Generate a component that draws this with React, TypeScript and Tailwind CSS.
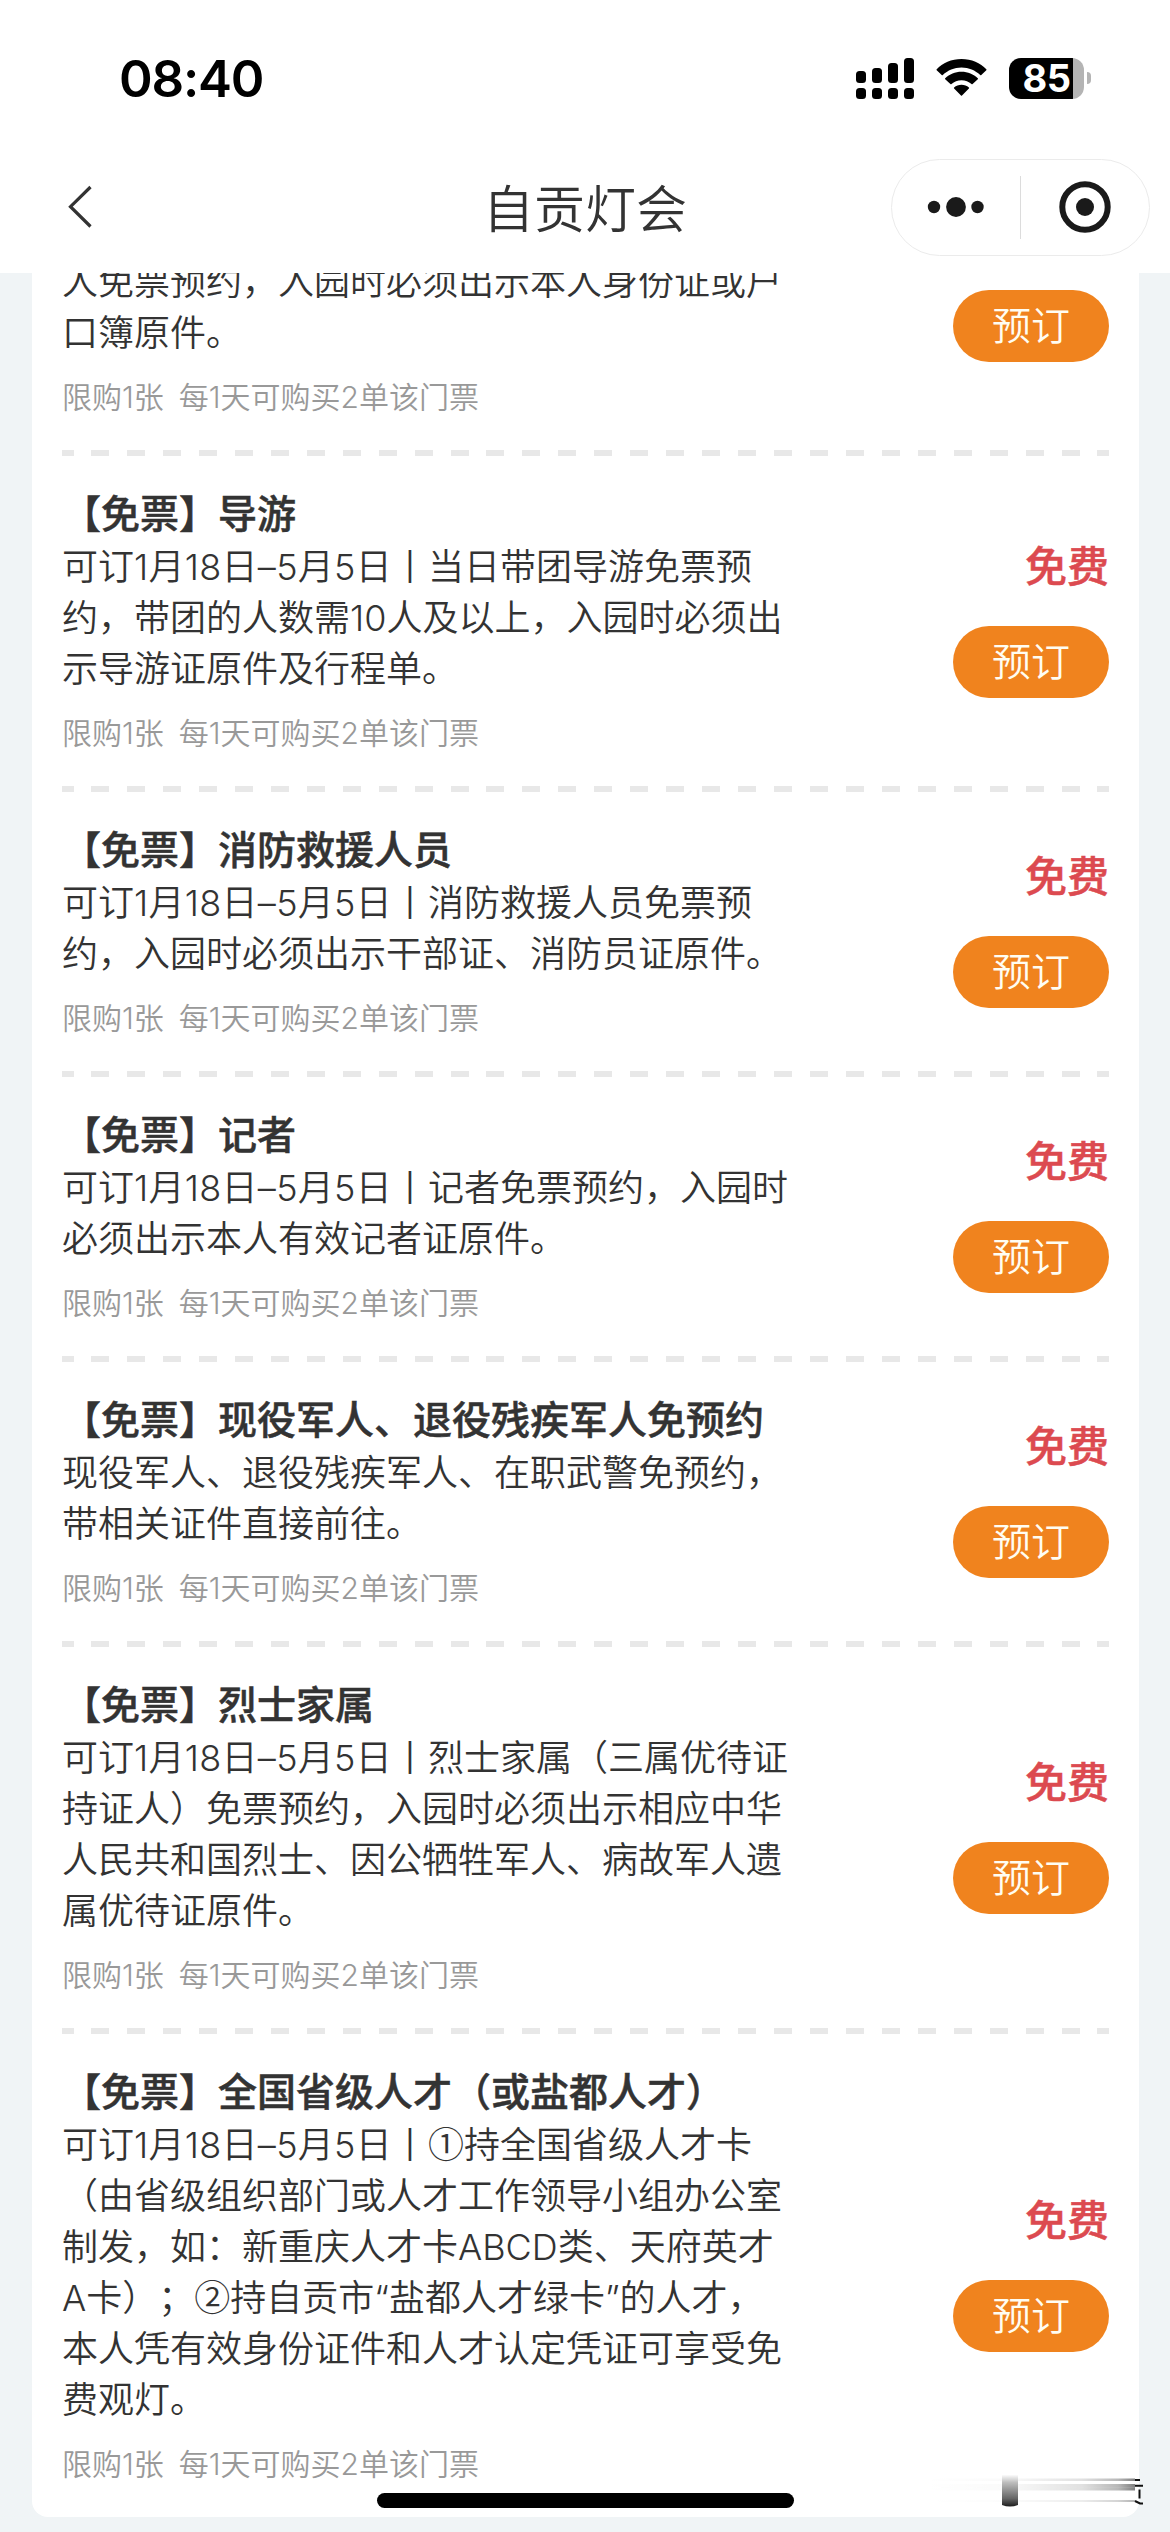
interface Ticket {
  title: string;
  lines: string[];
  price: string;
}

const tickets: Ticket[] = [
  {
    title: "",
    lines: ["", "人免票预约，入园时必须出示本人身份证或户", "口簿原件。"],
    price: "",
  },
  {
    title: "【免票】导游",
    lines: [
      "可订1月18日–5月5日丨当日带团导游免票预",
      "约，带团的人数需10人及以上，入园时必须出",
      "示导游证原件及行程单。",
    ],
    price: "免费",
  },
  {
    title: "【免票】消防救援人员",
    lines: [
      "可订1月18日–5月5日丨消防救援人员免票预",
      "约，入园时必须出示干部证、消防员证原件。",
    ],
    price: "免费",
  },
  {
    title: "【免票】记者",
    lines: [
      "可订1月18日–5月5日丨记者免票预约，入园时",
      "必须出示本人有效记者证原件。",
    ],
    price: "免费",
  },
  {
    title: "【免票】现役军人、退役残疾军人免预约",
    lines: [
      "现役军人、退役残疾军人、在职武警免预约，",
      "带相关证件直接前往。",
    ],
    price: "免费",
  },
  {
    title: "【免票】烈士家属",
    lines: [
      "可订1月18日–5月5日丨烈士家属（三属优待证",
      "持证人）免票预约，入园时必须出示相应中华",
      "人民共和国烈士、因公牺牲军人、病故军人遗",
      "属优待证原件。",
    ],
    price: "免费",
  },
  {
    title: "【免票】全国省级人才（或盐都人才）",
    lines: [
      "可订1月18日–5月5日丨①持全国省级人才卡",
      "（由省级组织部门或人才工作领导小组办公室",
      "制发，如：新重庆人才卡ABCD类、天府英才",
      "A卡）；②持自贡市“盐都人才绿卡”的人才，",
      "本人凭有效身份证件和人才认定凭证可享受免",
      "费观灯。",
    ],
    price: "免费",
  },
];

function StatusBar() {
  return (
    <div className="flex h-[156px] items-center justify-between pl-[119px] pr-[79px]">
      <span className="text-[51px] font-semibold leading-none tracking-[-1.2px] text-black">
        08:40
      </span>
      <div className="flex items-center">
        <svg className="h-[41px] w-[58px]" viewBox="0 0 58 41">
          <rect x="0" y="13" width="10" height="12" rx="3.500" />
          <rect x="16" y="10" width="10" height="15" rx="3.500" />
          <rect x="32" y="5" width="10" height="20" rx="3.500" />
          <rect x="48" y="0" width="10" height="25" rx="3.500" />
          <rect x="0" y="30" width="10" height="11" rx="3.500" />
          <rect x="16" y="30" width="10" height="11" rx="3.500" />
          <rect x="32" y="30" width="10" height="11" rx="3.500" />
          <rect x="48" y="30" width="10" height="11" rx="3.500" />
        </svg>
        <svg className="ml-[22px] h-[38px] w-[51px]" viewBox="0 0 51 38">
          <path d="M25.500 0C35.500 0 44.400 4 50.300 10.200a.8.800 0 0 1 0 1.100l-5 4.600a.8.800 0 0 1-1.100 0C39.300 11.300 32.800 8.400 25.500 8.400S11.700 11.300 6.800 15.900a.8.800 0 0 1-1.100 0l-5-4.600a.8.800 0 0 1 0-1.100C6.600 4 15.500 0 25.500 0z" />
          <path d="M25.500 12.800c6.400 0 12 2.500 16.300 6.400a.8.800 0 0 1 0 1.100l-5.200 4.800a.8.800 0 0 1-1.100 0c-2.700-2.300-6.100-3.800-10-3.800s-7.300 1.500-10 3.800a.8.800 0 0 1-1.100 0l-5.200-4.800a.8.800 0 0 1 0-1.100C13.500 15.300 19.100 12.800 25.500 12.800z" />
          <path d="M25.500 25.800c2.800 0 5.400 1 7.400 2.700a.8.800 0 0 1 0 1.100l-6.900 7a.7.700 0 0 1-1 0l-6.900-7a.8.800 0 0 1 0-1.100c2-1.700 4.600-2.700 7.400-2.700z" />
        </svg>
        <div className="ml-[22px] flex h-[41px] w-[75px] items-center justify-center rounded-[12px] bg-[linear-gradient(90deg,#000_64px,#b4b4b4_64px)] text-[38px] font-bold leading-[41px] tracking-[-0.5px] text-white">
          85
        </div>
        <div className="ml-[3px] h-[12px] w-[4px] rounded-r-full bg-[#b4b4b4]" />
      </div>
    </div>
  );
}

function NavBar() {
  return (
    <div className="grid h-[102px] grid-cols-3 items-center">
      <svg className="ml-[67px] h-[44px] w-[26px]" viewBox="0 0 26 44" fill="none" stroke="#333" strokeWidth="3.200">
        <path d="M23.500 2 3.500 21.700 23.500 41.500" />
      </svg>
      <h1 className="pt-[4px] text-center text-[51px] leading-none font-[350] text-[#333]">
        自贡灯会
      </h1>
      <div className="ml-[111px] flex h-[97px] w-[259px] items-center rounded-full border-[1.5px] border-[#ebebeb]">
        <svg className="ml-[35px] h-[20px] w-[58px]" viewBox="0 0 58 20" fill="#1a1a1a">
          <circle cx="7" cy="10" r="6.200" />
          <circle cx="29" cy="10" r="9.900" />
          <circle cx="50.500" cy="10" r="6.200" />
        </svg>
        <div className="ml-[35px] h-[63px] w-px bg-[#dcdcdc]" />
        <svg className="ml-[38px] h-[52px] w-[52px]" viewBox="0 0 52 52">
          <circle cx="26" cy="26" r="22.700" fill="none" stroke="#1a1a1a" strokeWidth="6" />
          <circle cx="26" cy="26" r="9" fill="#1a1a1a" />
        </svg>
      </div>
    </div>
  );
}

function Divider() {
  return (
    <div className="flex h-[6px]">
      <span className="w-[12px] bg-[#e8e8e8]" />
      <div className="mx-[17px] flex flex-1 justify-between">
        {Array.from({ length: 28 }).map((_, index) => (
          <span className="w-[18px] bg-[#e8e8e8]" key={index} />
        ))}
      </div>
      <span className="w-[12px] bg-[#e8e8e8]" />
    </div>
  );
}

function TicketLine({ text }: { text: string }) {
  return (
    <p className="h-[51px] pt-px text-[36px] font-[350] leading-[51px] text-[#333]">
      {text.split(/([①②]|1月18日–5月5日)/).map((part, index) => {
        if (index % 2 === 0) return part;
        // Date range is set a little wider
        if (part.length > 1) {
          return (
            <span className="tracking-[0.3px]" key={index}>
              {part}
            </span>
          );
        }
        // Circled numbers are taken from the CJK font so they stay one em wide
        return (
          <span className="font-['Noto_Sans_CJK_SC',sans-serif] leading-none" key={index}>
            {part}
          </span>
        );
      })}
    </p>
  );
}

function TicketItem({ ticket }: { ticket: Ticket }) {
  return (
    <div className="flex items-center justify-between">
      <div className="whitespace-nowrap pt-[30px] pb-[32px]">
        <h2 className="h-[55px] text-[39px] font-medium leading-[55px] text-[#333] [-webkit-text-stroke:0.5px_#333]">
          {ticket.title}
        </h2>
        {ticket.lines.map((line, index) => (
          <TicketLine text={line} key={index} />
        ))}
        <p className="mt-[18px] flex h-[42px] gap-[15px] text-[30px] font-[350] leading-[42px] text-[#999]">
          <span>限购1张</span>
          <span>每1天可购买2单该门票</span>
        </p>
      </div>
      <div className="flex flex-col items-end">
        <span className="h-[43px] text-[42px] font-medium leading-[43px] text-[#dc4a50] [-webkit-text-stroke:0.5px_#dc4a50]">
          {ticket.price}
        </span>
        <button className="mt-[38px] h-[72px] w-[156px] rounded-full bg-[#f0831e] text-[39px] font-[350] leading-[72px] text-[#fffdf2]">
          预订
        </button>
      </div>
    </div>
  );
}

// Smeared remains of the watermark in the corner
function Watermark() {
  return (
    <svg className="absolute bottom-[22px] left-[924px] h-[38px] w-[222px]" viewBox="0 0 222 38">
      <defs>
        <linearGradient id="streak" x1="0" x2="1" y1="0" y2="0">
          <stop offset="0" stopColor="#000" stopOpacity="0" />
          <stop offset="0.4" stopColor="#000" stopOpacity="0.02" />
          <stop offset="0.75" stopColor="#000" stopOpacity="0.12" />
          <stop offset="0.92" stopColor="#000" stopOpacity="0.28" />
          <stop offset="1" stopColor="#000" stopOpacity="0.5" />
        </linearGradient>
        <linearGradient id="block" x1="0" x2="0" y1="0" y2="1">
          <stop offset="0" stopColor="#fff" />
          <stop offset="0.25" stopColor="#bdbdbd" />
          <stop offset="0.75" stopColor="#666" />
          <stop offset="1" stopColor="#1c1c1c" />
        </linearGradient>
      </defs>
      <g fill="url(#streak)">
        <rect x="0" y="6.500" width="211" height="2.500" />
        <rect x="0" y="12" width="211" height="3.500" />
        <rect x="0" y="15.500" width="211" height="3" />
        <rect x="0" y="28" width="211" height="2" opacity="0.6" />
      </g>
      <path d="M78 2.500h16V33q-8 3-16 0z" fill="url(#block)" />
      <g fill="none" stroke="#111" strokeWidth="2">
        <path d="M211 8h5M211 13.800h8M215.500 17.500v9M211 29l5 2.500h3" />
      </g>
    </svg>
  );
}

export default function App() {
  return (
    <div className="relative h-[2532px] w-[1170px] overflow-hidden bg-[#f0f4f6] font-['Inter','Noto_Sans_CJK_SC',sans-serif] [text-spacing-trim:space-all]">
      <header className="h-[273px] bg-white">
        <StatusBar />
        <NavBar />
      </header>

      <main className="ml-[32px] w-[1107px] rounded-b-[16px] bg-white px-[30px]">
        {tickets.map((ticket, index) =>
          index === 0 ? (
            // scrolled under the header, only its lower part shows
            <div className="flex h-[177px] flex-col justify-end overflow-hidden" key={index}>
              <div className="shrink-0">
                <TicketItem ticket={ticket} />
              </div>
            </div>
          ) : (
            <div key={index}>
              <Divider />
              <TicketItem ticket={ticket} />
            </div>
          )
        )}
      </main>

      <Watermark />

      {/* Home indicator */}
      <div className="absolute bottom-[24px] left-[377px] h-[15px] w-[417px] rounded-full bg-black" />
    </div>
  );
}
